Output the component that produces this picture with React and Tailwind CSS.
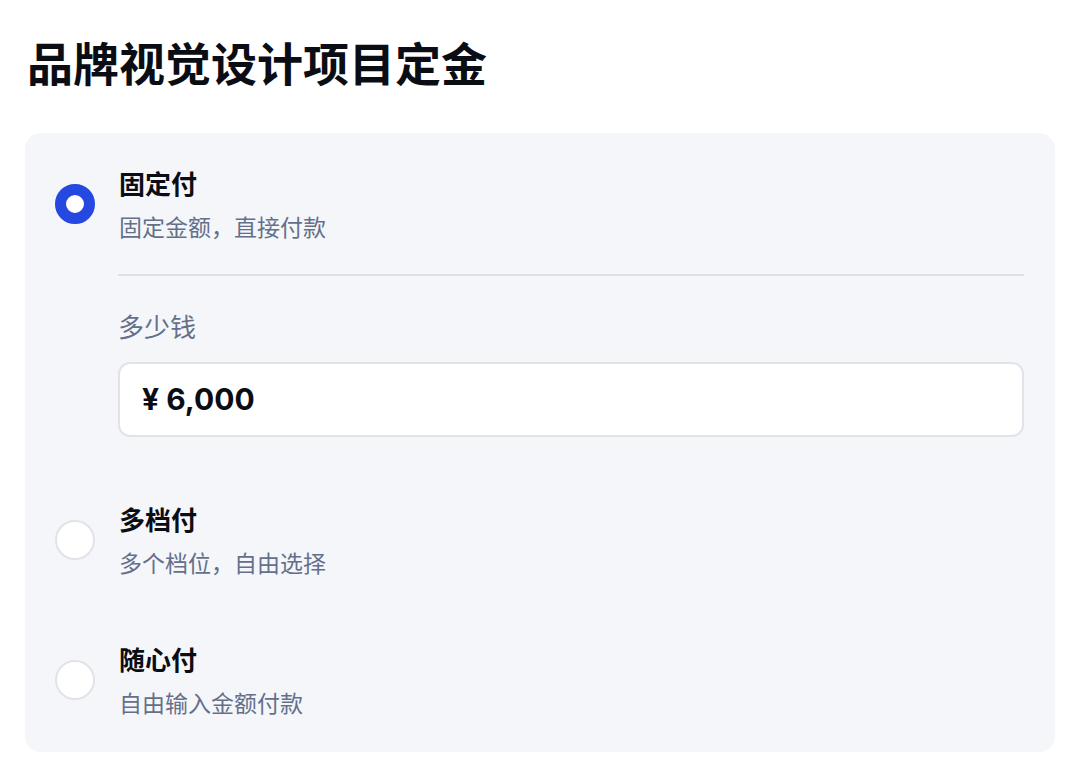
export default function App() {
  const font = { fontFamily: '"Noto Sans CJK SC", "Noto Sans", sans-serif' };
  return (
    <div className="w-[1080px] h-[780px] bg-white overflow-hidden" style={font}>
      <div className="pl-[27px] pt-[29px]">
        <h1 className="text-[46px] leading-[64px] font-bold text-[#0b0d14]">品牌视觉设计项目定金</h1>
      </div>
      <div className="mx-[25px] mt-[40px] w-[1030px] rounded-[16px] bg-[#f5f6fa] pl-[30px] pr-[31px] pt-[32px] pb-[34px]">
        {/* Option 1 */}
        <div className="flex items-center gap-[24px]">
          <div className="w-[40px] h-[40px] rounded-full border-[11px] border-[#2448e0] bg-white shrink-0" />
          <div className="flex flex-col">
            <div className="text-[26px] leading-[36px] font-bold text-[#0b0d14]">固定付</div>
            <div className="mt-[9px] text-[23px] leading-[32px] text-[#64708a]">固定金额，直接付款</div>
          </div>
        </div>
        <div className="ml-[63px]">
          <div className="mt-[32px] h-[2px] bg-[#dfe1e7]" />
          <div className="mt-[32px] text-[26px] leading-[36px] text-[#64708a]">多少钱</div>
          <div className="mt-[18px] h-[75px] rounded-[12px] border-2 border-[#e1e3e8] bg-white flex items-center pl-[22px]">
            <span className="text-[30px] font-bold text-[#0b0d14]" style={{ fontFamily: '"Inter", "Noto Sans CJK SC", sans-serif' }}>¥ 6,000</span>
          </div>
        </div>
        {/* Option 2 */}
        <div className="mt-[64px] flex items-center gap-[24px]">
          <div className="w-[40px] h-[40px] rounded-full border-2 border-[#e1e3e8] bg-white shrink-0" />
          <div className="flex flex-col">
            <div className="text-[26px] leading-[36px] font-bold text-[#0b0d14]">多档付</div>
            <div className="mt-[9px] text-[23px] leading-[32px] text-[#64708a]">多个档位，自由选择</div>
          </div>
        </div>
        {/* Option 3 */}
        <div className="mt-[63px] flex items-center gap-[24px]">
          <div className="w-[40px] h-[40px] rounded-full border-2 border-[#e1e3e8] bg-white shrink-0" />
          <div className="flex flex-col">
            <div className="text-[26px] leading-[36px] font-bold text-[#0b0d14]">随心付</div>
            <div className="mt-[9px] text-[23px] leading-[32px] text-[#64708a]">自由输入金额付款</div>
          </div>
        </div>
      </div>
    </div>
  );
}
